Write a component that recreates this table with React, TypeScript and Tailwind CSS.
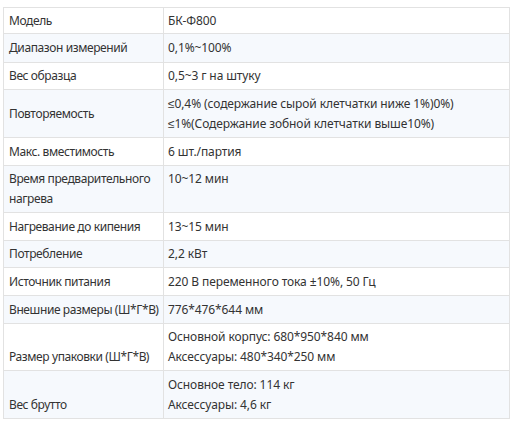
import React from "react";

type Row = {
  label: string[];
  value: string[];
  h: string;
  align: string;
  bg: boolean;
};

const rows: Row[] = [
  { label: ["Модель"], value: ["БК-Ф800"], h: "h-[26px]", align: "self-center", bg: false },
  { label: ["Диапазон измерений"], value: ["0,1%~100%"], h: "h-[29px]", align: "self-center", bg: true },
  { label: ["Вес образца"], value: ["0,5~3 г на штуку"], h: "h-[27px]", align: "self-center", bg: false },
  {
    label: ["Повторяемость"],
    value: [
      "≤0,4% (содержание сырой клетчатки ниже 1%)0%)",
      "≤1%(Содержание зобной клетчатки выше10%)",
    ],
    h: "h-[48px]",
    align: "self-center",
    bg: true,
  },
  { label: ["Макс. вместимость"], value: ["6 шт./партия"], h: "h-[28px]", align: "self-center", bg: false },
  {
    label: ["Время предварительного", "нагрева"],
    value: ["10~12 мин"],
    h: "h-[47px]",
    align: "self-start",
    bg: true,
  },
  { label: ["Нагревание до кипения"], value: ["13~15 мин"], h: "h-[28px]", align: "self-center", bg: false },
  { label: ["Потребление"], value: ["2,2 кВт"], h: "h-[27px]", align: "self-center", bg: true },
  { label: ["Источник питания"], value: ["220 В переменного тока ±10%, 50 Гц"], h: "h-[28px]", align: "self-center", bg: false },
  { label: ["Внешние размеры (Ш*Г*В)"], value: ["776*476*644 мм"], h: "h-[28px]", align: "self-center", bg: true },
  {
    label: ["Размер упаковки (Ш*Г*В)"],
    value: ["Основной корпус: 680*950*840 мм", "Аксессуары: 480*340*250 мм"],
    h: "h-[47px]",
    align: "self-end",
    bg: false,
  },
  {
    label: ["Вес брутто"],
    value: ["Основное тело: 114 кг", "Аксессуары: 4,6 кг"],
    h: "h-[48px]",
    align: "self-end",
    bg: true,
  },
];

export default function App() {
  return (
    <div className="w-[520px] h-[423px] bg-white pt-[7px] pl-[3px] text-[12px] leading-5 text-[#333] font-['Noto_Sans',sans-serif]">
      <div className="w-[507px] border-l border-t border-[#e2e2e2]">
        {rows.map((r, i) => (
          <div key={i} className={`flex ${r.h} ${r.bg ? "bg-[#f6f9fd]" : "bg-white"}`}>
            <div className="w-[160px] shrink-0 flex border-r border-b border-[#e2e2e2] px-[5px] py-[3px]">
              <div className={`${r.align} whitespace-nowrap tracking-[-0.4px]`}>
                {r.label.map((l, j) => (
                  <div key={j}>{l}</div>
                ))}
              </div>
            </div>
            <div
              className={`flex-1 flex flex-col ${
                r.align === "self-start" ? "justify-start" : "justify-center"
              } border-r border-b border-[#e2e2e2] px-[4px] py-[3px] tracking-[-0.1px]`}
            >
              {r.value.map((v, j) => (
                <div key={j}>{v}</div>
              ))}
            </div>
          </div>
        ))}
      </div>
    </div>
  );
}
